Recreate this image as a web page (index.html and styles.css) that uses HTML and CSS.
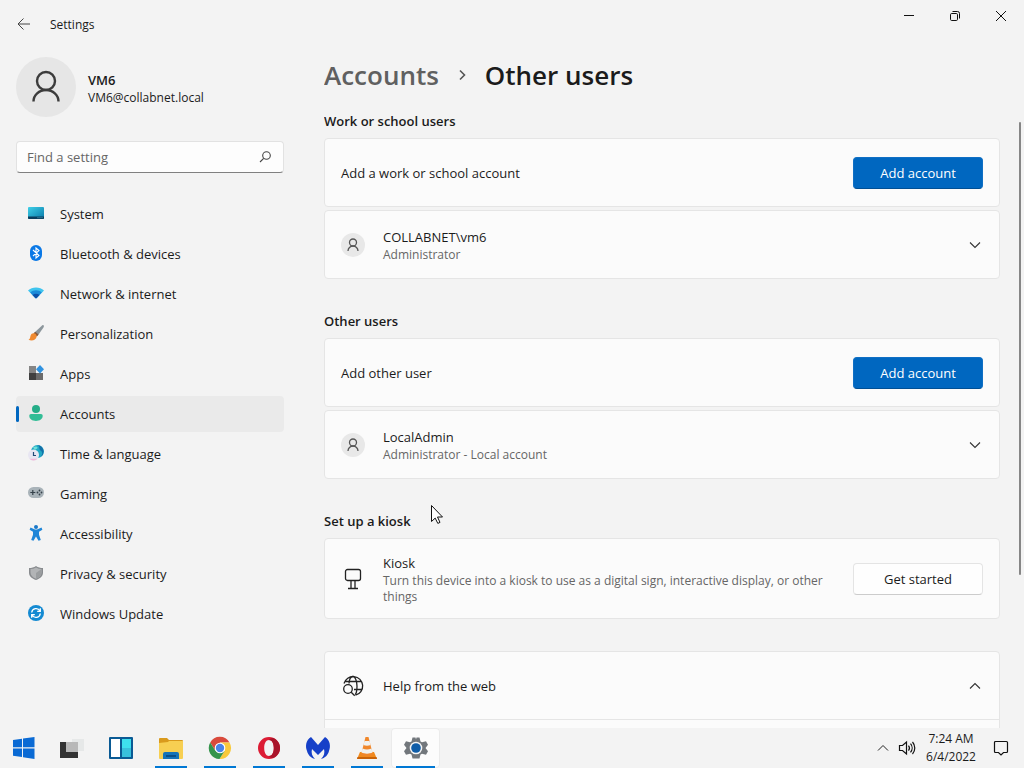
FILE: index.html
```html
<!DOCTYPE html>
<html lang="en">
<head>
    <meta charset="UTF-8">
    <title>Settings</title>
    <link rel="stylesheet" href="styles.css">
</head>
<body>
    <div class="window">
        <!-- Title bar -->
        <header class="titlebar">
            <button class="back-button" aria-label="Back">
                <svg width="14" height="14" viewBox="0 0 14 14" fill="none" stroke="#444"><path d="M13 7H1.2M6.5 1.5L1 7l5.500 5.500"/></svg>
            </button>
            <span class="window-title">Settings</span>
            <div class="window-controls">
                <button aria-label="Minimize"><svg width="12" height="12" viewBox="0 0 12 12" fill="none" stroke="#111"><path d="M1 5.500h10"/></svg></button>
                <button aria-label="Restore"><svg width="12" height="12" viewBox="0 0 12 12" fill="none" stroke="#111"><rect x="1.500" y="3.500" width="7" height="7" rx="1.200"/><path d="M3.500 1.500h5a2 2 0 0 1 2 2v5"/></svg></button>
                <button aria-label="Close"><svg width="12" height="12" viewBox="0 0 12 12" fill="none" stroke="#111"><path d="M1 1l10 10M11 1L1 11"/></svg></button>
            </div>
        </header>

        <div class="window-body">
            <!-- Sidebar -->
            <aside class="sidebar">
                <div class="profile">
                    <div class="avatar">
                        <svg width="32" height="36" viewBox="0 0 32 36" fill="none" stroke="#3c3c3c" stroke-width="2.400"><circle cx="16" cy="12" r="9"/><path d="M3.500 32.500a12.500 11.500 0 0 1 25 0"/></svg>
                    </div>
                    <div class="profile-text">
                        <div class="profile-name">VM6</div>
                        <div class="profile-email">VM6@collabnet.local</div>
                    </div>
                </div>

                <div class="search">
                    <input type="text" placeholder="Find a setting" aria-label="Find a setting">
                    <svg width="14" height="14" viewBox="0 0 14 14" fill="none" stroke="#444" stroke-width="1.100"><circle cx="7.500" cy="5.500" r="3.800"/><path d="M4.700 8.300L1 12"/></svg>
                </div>

                <nav class="nav">
                    <a href="#">
                        <svg width="16" height="16" viewBox="0 0 16 16"><defs><linearGradient id="sys" x2="1" y2="1"><stop stop-color="#3fd0e8"/><stop offset="1" stop-color="#0878a8"/></linearGradient></defs><rect y="2" width="16" height="12" rx="1" fill="url(#sys)"/><path d="M0 11.500h16V13a1 1 0 0 1-1 1H1a1 1 0 0 1-1-1z" fill="#0a3c5c"/><path d="M9.500 12.700h1m1 0h1m1 0h1" stroke="#5cc8e0" stroke-width=".8"/></svg>
                        System
                    </a>
                    <a href="#">
                        <svg width="16" height="16" viewBox="0 0 16 16"><rect x="2" width="12" height="16" rx="6" fill="#0a78e6"/><path d="M5 5l6 5.500-3 2.500V3l3 2.500L5 11" fill="none" stroke="#fff" stroke-width="1.100"/></svg>
                        Bluetooth &amp; devices
                    </a>
                    <a href="#">
                        <svg width="16" height="16" viewBox="0 0 16 16"><path d="M0 5.500C4 1.500 12 1.500 16 5.500L8.700 13a1 1 0 0 1-1.400 0z" fill="#3fc4ee"/><path d="M2.200 7.500c3.300-3 8.300-3 11.600 0L8.700 13a1 1 0 0 1-1.400 0z" fill="#1a8ad8"/><path d="M4.500 10c2-1.800 5-1.800 7 0L8.700 13a1 1 0 0 1-1.400 0z" fill="#0b50a8"/></svg>
                        Network &amp; internet
                    </a>
                    <a href="#">
                        <svg width="16" height="16" viewBox="0 0 16 16"><path d="M15.500 0.300c.8.800.3 1.700-.2 2.500L9.500 11 6 8 13.500 1c.7-.6 1.400-1.200 2-.7z" fill="#8c969c"/><path d="M7.300 6.800l3.200 2.800-1.700 2L5.500 8.500z" fill="#8b5a38"/><path d="M5.700 8.300c1.800.2 3 1.500 3 3.200C8 15 4 16.500.5 14.800 2.500 14 2 12 2.700 10.300c.5-1.300 1.600-2.100 3-2z" fill="#f08a30"/></svg>
                        Personalization
                    </a>
                    <a href="#">
                        <svg width="16" height="16" viewBox="0 0 16 16"><path d="M1 1h7v7H1z" fill="#858585"/><path d="M1 8h7v7H1z" fill="#404040"/><path d="M8 8h7v7H8z" fill="#6b6b6b"/><path d="M12 0l4 4.200-4 4.300-4-4.300z" fill="#2f92e0"/></svg>
                        Apps
                    </a>
                    <a href="#" class="active">
                        <svg width="16" height="16" viewBox="0 0 16 16"><circle cx="8" cy="4" r="4" fill="#25ad88"/><path d="M3 9h10c1 0 1.700.8 1.700 1.800C14.700 14 11.800 16 8 16s-6.700-2-6.700-5.200C1.300 9.800 2 9 3 9z" fill="#32bd96"/></svg>
                        Accounts
                    </a>
                    <a href="#">
                        <svg width="16" height="16" viewBox="0 0 16 16"><circle cx="9.500" cy="6.500" r="6.500" fill="#22a8c4"/><path d="M9.500 0c3 2 1 4 3 5.500s2.500 3.500 0 6.500A6.500 6.500 0 0 0 9.500 0z" fill="#1470a8"/><path d="M5 2.500c2-1.500 4-1 4.500 0S8 4 7 5z" fill="#6fe0d8"/><circle cx="5.500" cy="10" r="5.500" fill="#e8e6f2"/><path d="M1.500 13.800a5.500 5.500 0 0 0 8 0z" fill="#f2b6d8"/><path d="M5.500 7v3.500H8" fill="none" stroke="#234a78" stroke-width="1.200"/></svg>
                        Time &amp; language
                    </a>
                    <a href="#">
                        <svg width="16" height="16" viewBox="0 0 16 16"><rect y="2" width="16" height="11" rx="5.500" fill="#a9b3b9"/><path d="M2.300 7.500h5M4.800 5v5" stroke="#35414a" stroke-width="1.200"/><g fill="#35414a"><circle cx="11.500" cy="5.500" r=".9"/><circle cx="11.500" cy="9.500" r=".9"/><circle cx="9.500" cy="7.500" r=".9"/><circle cx="13.500" cy="7.500" r=".9"/></g></svg>
                        Gaming
                    </a>
                    <a href="#">
                        <svg width="16" height="16" viewBox="0 0 16 16"><circle cx="8" cy="2" r="2" fill="#1a78c8"/><path d="M2.500 2.600L7 4.600h2l4.500-2 .9 2.200L11 6.700v3l1.800 5.300-2.300.8L8 11.500 5.500 15.800 3.200 15 5 9.700v-3L1.600 4.800z" fill="#1f86d8"/></svg>
                        Accessibility
                    </a>
                    <a href="#">
                        <svg width="16" height="16" viewBox="0 0 16 16"><path d="M8 1c2 1.500 4.500 2 7 2v4.500c0 4-3 6-7 7.500-4-1.500-7-3.500-7-7.500V3c2.500 0 5-.5 7-2z" fill="#888b8e"/><path d="M8 2.500c1.800 1 3.600 1.500 5.500 1.600v3.400c0 3-2.300 5-5.500 6.300-3.200-1.300-5.500-3.300-5.500-6.300V4.100C4.400 4 6.200 3.500 8 2.500z" fill="#b2b4b6"/><path d="M8 8l5.500-3.900v3.400c0 3-2.300 5-5.500 6.300z" fill="#9a9d9f"/></svg>
                        Privacy &amp; security
                    </a>
                    <a href="#">
                        <svg width="16" height="16" viewBox="0 0 16 16"><circle cx="8" cy="8" r="8" fill="#148ad2"/><path d="M3.700 7.500A4.400 4.400 0 0 1 12 6M12.300 3.200V6.300H9.200M12.300 8.500A4.400 4.400 0 0 1 4 10M3.700 12.800V9.700h3.100" fill="none" stroke="#fff" stroke-width="1.300"/></svg>
                        Windows Update
                    </a>
                </nav>
            </aside>

            <!-- Page content -->
            <main class="content">
                <h1 class="breadcrumb">
                    <a href="#">Accounts</a>
                    <svg width="14" height="14" viewBox="0 0 14 14" fill="none" stroke="#555" stroke-width="1.600"><path d="M5 2.500L9.500 7 5 11.500"/></svg>
                    <span>Other users</span>
                </h1>

                <section>
                    <h2>Work or school users</h2>
                    <div class="card">
                        <div class="card-title">Add a work or school account</div>
                        <button class="btn primary">Add account</button>
                    </div>
                    <div class="card">
                        <div class="card-icon small-avatar">
                            <svg width="12" height="14" viewBox="0 0 12 14" fill="none" stroke="#555" stroke-width="1.300"><circle cx="6" cy="4.500" r="3.500"/><path d="M1 13a5 5 0 0 1 10 0"/></svg>
                        </div>
                        <div class="card-text">
                            <div class="card-title">COLLABNET\vm6</div>
                            <div class="card-note">Administrator</div>
                        </div>
                        <button class="expand" aria-label="Expand COLLABNET\vm6"><svg width="12" height="8" viewBox="0 0 12 8" fill="none" stroke="#333" stroke-width="1.100"><path d="M1 1.500l5 5 5-5"/></svg></button>
                    </div>
                </section>

                <section>
                    <h2>Other users</h2>
                    <div class="card">
                        <div class="card-title">Add other user</div>
                        <button class="btn primary">Add account</button>
                    </div>
                    <div class="card">
                        <div class="card-icon small-avatar">
                            <svg width="12" height="14" viewBox="0 0 12 14" fill="none" stroke="#555" stroke-width="1.300"><circle cx="6" cy="4.500" r="3.500"/><path d="M1 13a5 5 0 0 1 10 0"/></svg>
                        </div>
                        <div class="card-text">
                            <div class="card-title">LocalAdmin</div>
                            <div class="card-note">Administrator - Local account</div>
                        </div>
                        <button class="expand" aria-label="Expand LocalAdmin"><svg width="12" height="8" viewBox="0 0 12 8" fill="none" stroke="#333" stroke-width="1.100"><path d="M1 1.500l5 5 5-5"/></svg></button>
                    </div>
                </section>

                <section class="kiosk">
                    <h2>Set up a kiosk</h2>
                    <div class="card">
                        <div class="card-icon">
                            <svg width="18" height="22" viewBox="0 0 18 22" fill="none" stroke="#222" stroke-width="1.300"><rect x="1.500" y="1.500" width="15" height="11" rx="2"/><path d="M7 12.500v8M11 12.500v8M4 20.500h10"/></svg>
                        </div>
                        <div class="card-text">
                            <div class="card-title">Kiosk</div>
                            <div class="card-note">Turn this device into a kiosk to use as a digital sign, interactive display, or other things</div>
                        </div>
                        <button class="btn">Get started</button>
                    </div>
                </section>

                <section class="help">
                    <div class="card">
                        <div class="card-icon">
                            <svg width="22" height="22" viewBox="0 0 22 22" fill="none" stroke="#222" stroke-width="1.300"><path d="M2 8.500a9.500 9.500 0 1 1 11.500 11.700M3 6.500h16.500M12 14.500h8M7 8.500C7.300 4.500 9 1.500 11 1.500s4 4 4 9.500-.8 7.500-1.800 8.700"/><circle cx="6" cy="14" r="4.300"/><path d="M9.200 17.200l3.500 3.600"/></svg>
                        </div>
                        <div class="card-title">Help from the web</div>
                        <button class="expand" aria-label="Collapse help"><svg width="12" height="8" viewBox="0 0 12 8" fill="none" stroke="#333" stroke-width="1.100"><path d="M1 6.500l5-5 5 5"/></svg></button>
                    </div>
                    <div class="card help-links"></div>
                </section>
            </main>
        </div>
        <div class="scroll-thumb"></div>
    </div>

    <!-- Taskbar -->
    <footer class="taskbar">
        <div class="tasks">
            <button aria-label="Start">
                <svg width="24" height="24" viewBox="0 0 24 24" fill="#0a6ad4"><path d="M1 4l9-1.300v8.600H1zM11 2.600L22.500 1v10.300H11zM1 12.400h9V21l-9-1.300zM11 12.400h11.500V23L11 21.200z"/></svg>
            </button>
            <button aria-label="Task view">
                <svg width="26" height="24" viewBox="0 0 26 24"><path d="M12 3h12v12H12z" fill="#e6e8e8"/><path d="M0 6h18v16H0z" fill="#333"/><path d="M6 6h12v10H6z" fill="#b8b8b8"/></svg>
            </button>
            <button aria-label="Widgets">
                <svg width="26" height="24" viewBox="0 0 26 24"><rect y="1" width="24" height="22" rx="1" fill="#0a5a94"/><path d="M2 3h9v18H2z" fill="#fff"/><path d="M13 3h9v9h-9z" fill="#3ee0ee"/><path d="M13 12h9v9h-9z" fill="#38c0dc"/></svg>
            </button>
            <button class="running" aria-label="File Explorer">
                <svg width="26" height="24" viewBox="0 0 26 24"><path d="M1 3a1 1 0 0 1 1-1h7l2 2h13a1 1 0 0 1 1 1v4H1z" fill="#d99a1c"/><path d="M1 7l9-1 1-1h14v17a1 1 0 0 1-1 1H2a1 1 0 0 1-1-1z" fill="#f7cf52"/><path d="M5 23v-5a2 2 0 0 1 2-2h12a2 2 0 0 1 2 2v5z" fill="#1673b8"/><path d="M8 20h10" stroke="#0a4f88" stroke-width="2"/></svg>
            </button>
            <button class="running" aria-label="Chrome">
                <svg width="24" height="24" viewBox="0 0 24 24"><path d="M2.200 6.500A11 11 0 0 1 21.500 6.500H12L7.200 14.500z" fill="#d94a3c"/><path d="M21.500 6.500A11 11 0 0 1 11.500 23l5.200-8.300L16.500 9l-4.500-2.500z" fill="#f8c93c"/><path d="M2.200 6.500A11 11 0 0 0 11.500 23L16.500 15 7.200 14.500z" fill="#35944c"/><circle cx="12" cy="12" r="5.300" fill="#fff"/><circle cx="12" cy="12" r="4.200" fill="#4a84e8"/></svg>
            </button>
            <button class="running" aria-label="Opera">
                <svg width="24" height="24" viewBox="0 0 24 24"><path fill-rule="evenodd" fill="#dc1c34" d="M12 1a11 11 0 1 1 0 22 11 11 0 0 1 0-22zm0 3C9 4 7.200 7.500 7.200 12S9 20 12 20s4.800-3.500 4.800-8S15 4 12 4z"/><path d="M16 2c5 2 7 6 7 10s-2 8-7 10c-2 0-3.500-1-4-2 3 0 4.800-3.500 4.800-8S15 4 12 4c.5-1 2-2 4-2z" fill="#a9142a"/></svg>
            </button>
            <button class="running" aria-label="Malwarebytes">
                <svg width="26" height="24" viewBox="0 0 26 24"><path d="M6 1l7 8 7-8c5 3 6 9 4 14-1 4-4 7-8 8 3-3 4-6 3-10l-6 6-6-6c-1 4 0 7 3 10-4-1-7-4-8-8C0 10 1 4 6 1z" fill="#1640c8"/></svg>
            </button>
            <button class="running" aria-label="VLC">
                <svg width="24" height="24" viewBox="0 0 24 24"><path d="M5 16h14l3 7H2z" fill="#f08a1c"/><path d="M10.500 1h3L18 19c-3 1.500-9 1.500-12 0z" fill="#f0872a"/><path d="M9.500 5h5l1.100 4c-2 1-5.200 1-7.200 0zM7.500 12.500c3 1.300 6 1.300 9 0l1 4c-3 1.500-8 1.500-11 0z" fill="#f1f1ee"/><path d="M2.500 21h19l.5 2H2z" fill="#c96208"/></svg>
            </button>
            <button class="running current" aria-label="Settings">
                <svg width="24" height="24" viewBox="0 0 24 24"><path d="M8.500 1.500h3l.5 2 .5-2h3l1 4 1.500.8 4-1 2 3.400-2.500 3.300 2.500 3.300-2 3.400-4-1-1.500.8-1 4h-7l-1-4-1.500-.8-4 1-2-3.400L2.500 12 0 8.700l2-3.400 4 1 1.500-.8z" fill="#72777c"/><circle cx="12" cy="12" r="6.300" fill="#f5f5f5"/><circle cx="12" cy="12" r="4.800" fill="#0f5da8"/></svg>
            </button>
        </div>
        <div class="tray">
            <button aria-label="Show hidden icons"><svg width="12" height="8" viewBox="0 0 12 8" fill="none" stroke="#222"><path d="M1 6.500l5-5 5 5"/></svg></button>
            <button aria-label="Volume"><svg width="18" height="16" viewBox="0 0 18 16" fill="none" stroke="#111" stroke-width="1.200"><path d="M1.500 5.500h3l4-3.500v12l-4-3.500h-3zM10.500 5.500a4 4 0 0 1 0 5M12.500 3.700a6.500 6.500 0 0 1 0 8.600M14.500 2a9 9 0 0 1 0 12"/></svg></button>
            <div class="clock">
                <div>7:24 AM</div>
                <div>6/4/2022</div>
            </div>
            <button aria-label="Notifications"><svg width="16" height="16" viewBox="0 0 16 16" fill="none" stroke="#111" stroke-width="1.200"><path d="M2.500 1.500h11a1 1 0 0 1 1 1v9a1 1 0 0 1-1 1h-3L8 15l-2.500-2.500h-3a1 1 0 0 1-1-1v-9a1 1 0 0 1 1-1z"/></svg></button>
        </div>
    </footer>

    <!-- Mouse pointer -->
    <svg class="pointer" width="14" height="22" viewBox="0 0 14 22"><path d="M1.500 1.500v16l3.700-3.400 2.600 5.300 2.200-1-2.500-5.400h5z" fill="#fff" stroke="#111"/></svg>
</body>
</html>
```
FILE: styles.css
```css
* {
    box-sizing: border-box;
}

body {
    height: 100vh;
    margin: 0;
    display: flex;
    flex-direction: column;
    overflow: hidden;
    background: #f3f3f3;
    color: #1b1b1b;
    font-family: "Open Sans", "Noto Sans", sans-serif;
    font-size: 13px;
    line-height: 18px;
}

button {
    font: inherit;
    color: inherit;
    border: none;
    padding: 0;
    background: none;
}

a {
    color: inherit;
    text-decoration: none;
}

h1,
h2 {
    margin: 0;
    font-weight: 600;
}

.window {
    flex: 1;
    min-height: 0;
    display: flex;
    flex-direction: column;
    position: relative;
}

/* Title bar */
.titlebar {
    height: 48px;
    flex-shrink: 0;
    display: flex;
    align-items: center;
}

.back-button {
    width: 48px;
    margin-right: 2px;
    display: flex;
    justify-content: center;
}

.window-title {
    font-size: 12px;
    padding-top: 2px;
}

.window-controls {
    margin-left: auto;
    align-self: flex-start;
    display: flex;
}

.window-controls button {
    width: 46px;
    height: 32px;
    display: flex;
    align-items: center;
    justify-content: center;
}

.window-body {
    flex: 1;
    min-height: 0;
    display: flex;
    gap: 40px;
    padding: 0 24px 0 16px;
}

/* Sidebar */
.sidebar {
    width: 268px;
    flex-shrink: 0;
    padding-top: 9px;
}

.profile {
    display: flex;
    align-items: center;
    gap: 12px;
    margin-bottom: 24px;
}

.avatar {
    width: 60px;
    height: 60px;
    border-radius: 50%;
    background: #e6e6e6;
    display: flex;
    align-items: center;
    justify-content: center;
}

.profile-text {
    padding-top: 4px;
}

.profile-name {
    font-weight: 600;
}

.profile-email {
    font-size: 12px;
}

.search {
    height: 32px;
    display: flex;
    align-items: center;
    padding: 0 10px;
    background: #fdfdfd;
    border: 1px solid #e2e2e2;
    border-bottom-color: #808080;
    border-radius: 4px;
    margin-bottom: 23px;
}

.search input {
    flex: 1;
    min-width: 0;
    padding: 0;
    border: none;
    outline: none;
    background: none;
    font: inherit;
}

.search input::placeholder {
    color: #666;
}

.nav {
    display: flex;
    flex-direction: column;
    gap: 4px;
}

.nav a {
    height: 36px;
    display: flex;
    align-items: center;
    gap: 16px;
    padding-left: 12px;
    border-radius: 4px;
}

.nav svg {
    margin-bottom: 2px;
}

.nav .active {
    position: relative;
    background: #eaeaea;
}

.nav .active::before {
    content: "";
    position: absolute;
    left: 0;
    width: 3px;
    height: 16px;
    border-radius: 2px;
    background: #0067c0;
}

/* Page content */
.content {
    flex: 1;
    min-width: 0;
    overflow: hidden;
}

.breadcrumb {
    display: flex;
    align-items: center;
    gap: 16px;
    font-size: 26px;
    line-height: 40px;
    margin: 7px 0 17px;
}

.breadcrumb a {
    color: #606060;
}

section {
    margin-bottom: 33px;
}

h2 {
    font-size: 13px;
    margin-bottom: 8px;
}

.card {
    min-height: 69px;
    display: flex;
    align-items: center;
    justify-content: space-between;
    padding: 12px 16px;
    background: #fbfbfb;
    border: 1px solid #e5e5e5;
    border-radius: 4px;
}

.card + .card {
    margin-top: 3px;
}

.kiosk .card {
    min-height: 81px;
}

.card-title {
    flex: 1;
}

.card-text {
    flex: 1;
    padding-top: 1px;
}

.card-note {
    padding-top: 1px;
    font-size: 12px;
    line-height: 16px;
    color: #666;
}

.card-icon {
    width: 24px;
    height: 24px;
    flex-shrink: 0;
    display: flex;
    align-items: center;
    justify-content: center;
    margin-right: 18px;
}

.small-avatar {
    border-radius: 50%;
    background: #e8e8e8;
}

.btn {
    width: 130px;
    height: 32px;
    flex-shrink: 0;
    margin-left: 24px;
    background: #fefefe;
    border: 1px solid #e4e4e4;
    border-bottom-color: #ccc;
    border-radius: 4px;
}

.primary {
    background: #0067c0;
    border-color: #0f6fc4;
    border-bottom-color: #004f94;
    color: white;
}

.expand {
    width: 16px;
    height: 16px;
    display: flex;
    align-items: center;
    justify-content: center;
}

.kiosk {
    margin-bottom: 32px;
}

.help .card {
    border-radius: 4px 4px 0 0;
}

.help .help-links {
    margin-top: -1px;
    border-radius: 0;
}

.scroll-thumb {
    position: absolute;
    top: 122px;
    right: 3px;
    bottom: 153px;
    width: 2px;
    border-radius: 1px;
    background: #868686;
}

/* Taskbar */
.taskbar {
    height: 40px;
    flex-shrink: 0;
    display: flex;
    justify-content: space-between;
    background: #f3f3f3;
}

.tasks {
    display: flex;
    margin-left: -1px;
}

.tasks button {
    width: 49px;
    display: flex;
    align-items: center;
    justify-content: center;
    position: relative;
}

.tasks .running::after {
    content: "";
    position: absolute;
    bottom: 0;
    left: 9px;
    right: 8px;
    height: 2px;
    background: #0078d4;
}

.tasks .current {
    background: #fcfcfc;
    box-shadow: inset 0 0 0 1px #ebebeb;
    border-radius: 4px;
}

.tasks .current::after {
    left: 5px;
    right: 5px;
}

.tray {
    display: flex;
    align-items: center;
    gap: 9px;
    padding-right: 15px;
}

.tray button {
    display: flex;
}

.clock {
    width: 52px;
    margin-right: 7px;
    font-size: 12px;
    text-align: center;
    white-space: nowrap;
}

.pointer {
    position: absolute;
    left: 430px;
    top: 504px;
}
```
